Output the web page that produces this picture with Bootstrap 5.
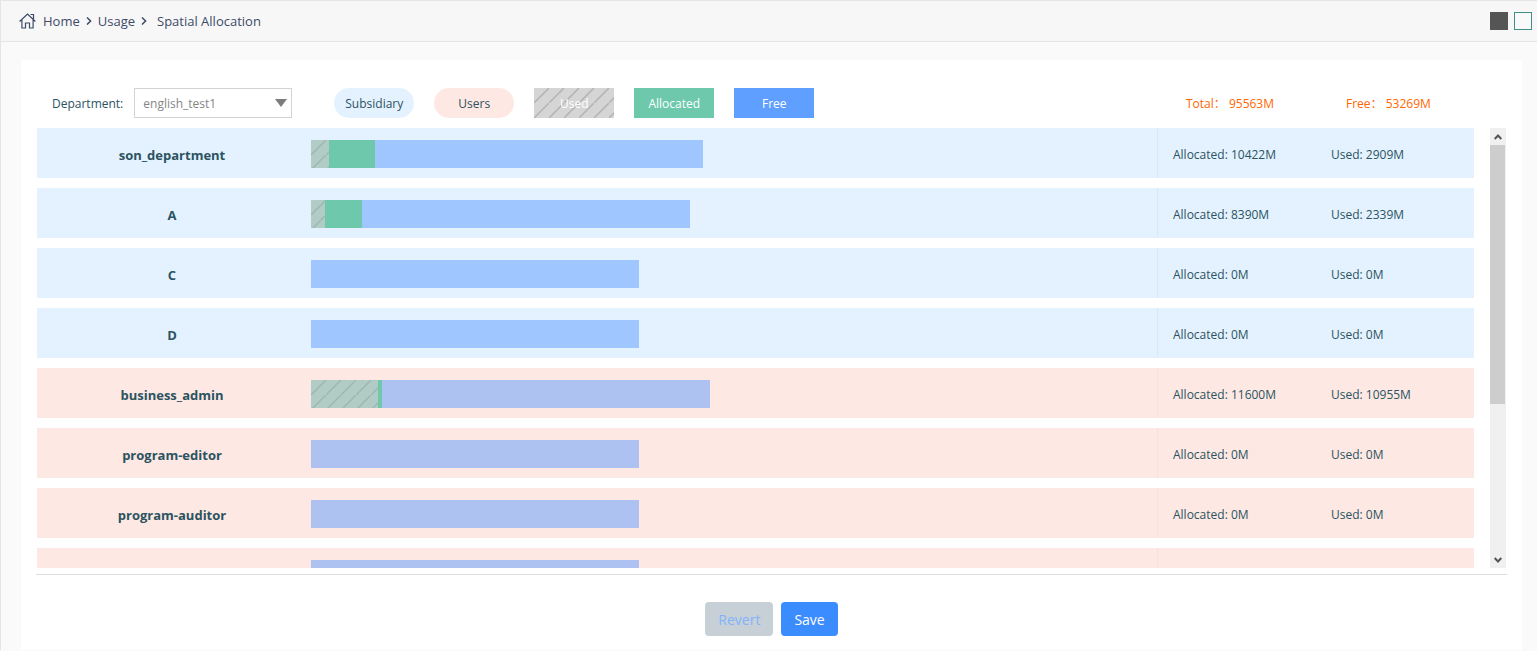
<!DOCTYPE html>
<html lang="en">
<head>
<meta charset="utf-8">
<meta name="viewport" content="width=device-width, initial-scale=1">
<title>Spatial Allocation</title>
<link href="https://cdn.jsdelivr.net/npm/bootstrap@5.3.0/dist/css/bootstrap.min.css" rel="stylesheet">
<style>
body{font-family:"Open Sans","Noto Sans CJK SC",sans-serif;font-size:12px;line-height:18px;color:#2b5361;background:#fafafa;border-left:1px solid #e5e5e5;border-top:1px solid #e5e5e5;overflow:hidden}
.topbar{height:41px;background:#f7f7f7;border-bottom:1px solid #e5e5e5;padding:0 5px 0 18px;font-size:13px}
.topbar a,.topbar .here{color:#3d4a68;text-decoration:none}
.crumbs{gap:6px}
.crumbs .home{gap:7px}
.crumbs .sep{width:6px;height:8px}
.swatches{gap:6px}
.swatch{width:18px;height:18px;padding:0;border:1px solid #555;background:#555}
.swatch.light{border-color:#3d8f88;background:#f9f9f9}
.panel{background:#fff;margin:18px 15px 0 20px;padding:28px 15px 14px}
.toolbar{height:30px;margin:0 33px 10px 16px}
.toolbar label,.totals{padding-top:2px}
.dept{width:158px;height:30px;margin-left:11px}
.dept select{width:100%;height:30px;appearance:none;border:1px solid #d3d3d3;border-radius:0;background:#fff;color:#868686;padding:2px 8px 0;font-size:12px}
.dept svg{position:absolute;right:5px;top:11px;pointer-events:none}
.legend{gap:20px;margin-left:42px}
.key{width:80px;height:30px;line-height:32px;text-align:center;color:#fff}
.key.sub,.key.usr{border-radius:15px;color:#2b5361}
.sub{background:#e4f2ff}
.usr{background:#fde8e3}
.used{background:#d5d5d5 linear-gradient(135deg,transparent 46%,#b5b5b5 47%,#b5b5b5 53%,transparent 54%) 0 0/15px 15px}
.alloc{background:#6ec8ac}
.free{background:#5f9fff}
.totals{color:#f60}
.totals span{width:160px}
.totals span:last-child{width:128px}
.scroller{height:440px;margin-left:1px}
.list-box{overflow:hidden;gap:10px}
.unit{height:50px;flex:none}
.unit .name{width:270px;font-size:13px;font-weight:700;text-align:center;padding-top:4px}
.unit .meter{height:28px;margin:2px 0 0 4px}
.unit .meter>div{height:28px}
.meter .used{background:#b1ccc5 linear-gradient(135deg,transparent 46%,#a2b8b3 47%,#a2b8b3 53%,transparent 54%) 0 0/15px 15px}
.meter .free{background:#a0c6ff;width:328px}
.usr .meter .free{background:#adc2f1}
.unit .stats{width:317px;border-left:1px solid #dce8f0;padding-left:15px;line-height:54px}
.usr .stats{border-color:#f8e0de}
.stats span{flex:0 0 158px}
.stats span:last-child{flex-basis:auto}
.rail{width:16px;margin-left:16px;margin-right:1px;background:#f0f0f0}
.rail button{width:16px;height:17px;border:0;padding:0;background:none;display:flex;align-items:center;justify-content:center}
.thumb{width:15px;height:259px;background:#cdcdcd}
.actions{border-top:1px solid #dcdcdc;margin-top:6px;padding-top:27px;gap:8px}
.actions .btn{height:34px;border:0;border-radius:4px;padding:2px 13px 0;font-size:14px;line-height:20px}
.actions .revert,.actions .revert:disabled{background:#c8d0d7;color:#83b3fb;opacity:1}
.actions .save{background:#3b8cff;color:#fff}
</style>
</head>
<body>
<header class="topbar d-flex align-items-center justify-content-between">
  <nav class="crumbs d-flex align-items-center" aria-label="breadcrumb">
    <a href="#" class="home d-flex align-items-center"><svg width="17" height="16" viewBox="0 0 17 16" fill="none" stroke="#3d4a68" stroke-width="1.2"><path d="M.6 8.500 8.500 1l7.900 7.500M2.900 7v8h3.600v-5h4v5h3.600V7M11.500 1.500h3v4.700"/></svg><span>Home</span></a>
    <svg class="sep" viewBox="0 0 6 8" fill="none" stroke="#3d4a68" stroke-width="1.5"><path d="m1 .5 3.600 3.500L1 7.500"/></svg>
    <a href="#">Usage</a>
    <svg class="sep" viewBox="0 0 6 8" fill="none" stroke="#3d4a68" stroke-width="1.5"><path d="m1 .5 3.600 3.500L1 7.500"/></svg>
    <span class="here ms-1">Spatial Allocation</span>
  </nav>
  <div class="swatches d-flex">
    <button class="swatch" type="button" aria-label="Dark theme"></button>
    <button class="swatch light" type="button" aria-label="Light theme"></button>
  </div>
</header>

<main class="panel">
  <div class="toolbar d-flex align-items-center">
    <label for="dept">Department:</label>
    <div class="dept position-relative">
      <select id="dept"><option>english_test1</option></select>
      <svg width="12" height="8" viewBox="0 0 12 8"><path d="M0 0h12L6 8z" fill="#7c7c7c"/></svg>
    </div>
    <div class="legend d-flex">
      <div class="key sub">Subsidiary</div>
      <div class="key usr">Users</div>
      <div class="key used">Used</div>
      <div class="key alloc">Allocated</div>
      <div class="key free">Free</div>
    </div>
    <div class="totals d-flex ms-auto"><span>Total： 95563M</span><span>Free： 53269M</span></div>
  </div>

  <div class="scroller d-flex">
    <div class="list-box d-flex flex-column flex-grow-1">
      <div class="unit sub d-flex align-items-center"><div class="name">son_department</div><div class="meter d-flex flex-grow-1"><div class="used" style="width:18px"></div><div class="alloc" style="width:46px"></div><div class="free"></div></div><div class="stats d-flex h-100"><span>Allocated: 10422M</span><span>Used: 2909M</span></div></div>
      <div class="unit sub d-flex align-items-center"><div class="name">A</div><div class="meter d-flex flex-grow-1"><div class="used" style="width:14px"></div><div class="alloc" style="width:37px"></div><div class="free"></div></div><div class="stats d-flex h-100"><span>Allocated: 8390M</span><span>Used: 2339M</span></div></div>
      <div class="unit sub d-flex align-items-center"><div class="name">C</div><div class="meter d-flex flex-grow-1"><div class="free"></div></div><div class="stats d-flex h-100"><span>Allocated: 0M</span><span>Used: 0M</span></div></div>
      <div class="unit sub d-flex align-items-center"><div class="name">D</div><div class="meter d-flex flex-grow-1"><div class="free"></div></div><div class="stats d-flex h-100"><span>Allocated: 0M</span><span>Used: 0M</span></div></div>
      <div class="unit usr d-flex align-items-center"><div class="name">business_admin</div><div class="meter d-flex flex-grow-1"><div class="used" style="width:67px"></div><div class="alloc" style="width:4px"></div><div class="free"></div></div><div class="stats d-flex h-100"><span>Allocated: 11600M</span><span>Used: 10955M</span></div></div>
      <div class="unit usr d-flex align-items-center"><div class="name">program-editor</div><div class="meter d-flex flex-grow-1"><div class="free"></div></div><div class="stats d-flex h-100"><span>Allocated: 0M</span><span>Used: 0M</span></div></div>
      <div class="unit usr d-flex align-items-center"><div class="name">program-auditor</div><div class="meter d-flex flex-grow-1"><div class="free"></div></div><div class="stats d-flex h-100"><span>Allocated: 0M</span><span>Used: 0M</span></div></div>
      <div class="unit usr d-flex align-items-center"><div class="name"></div><div class="meter d-flex flex-grow-1"><div class="free"></div></div><div class="stats d-flex h-100"></div></div>
    </div>
    <div class="rail d-flex flex-column">
      <button type="button" aria-label="Scroll up"><svg width="8" height="6" viewBox="0 0 8 6" fill="none" stroke="#555" stroke-width="2"><path d="m.7 5 3.300-3.500L7.300 5"/></svg></button>
      <div class="thumb"></div>
      <button class="mt-auto" type="button" aria-label="Scroll down"><svg width="8" height="6" viewBox="0 0 8 6" fill="none" stroke="#555" stroke-width="2"><path d="m.7 1 3.300 3.500L7.300 1"/></svg></button>
    </div>
  </div>

  <div class="actions d-flex justify-content-center">
    <button class="btn revert" type="button" disabled>Revert</button>
    <button class="btn save" type="button">Save</button>
  </div>
</main>
<script src="https://cdn.jsdelivr.net/npm/bootstrap@5.3.0/dist/js/bootstrap.bundle.min.js"></script>
</body>
</html>
